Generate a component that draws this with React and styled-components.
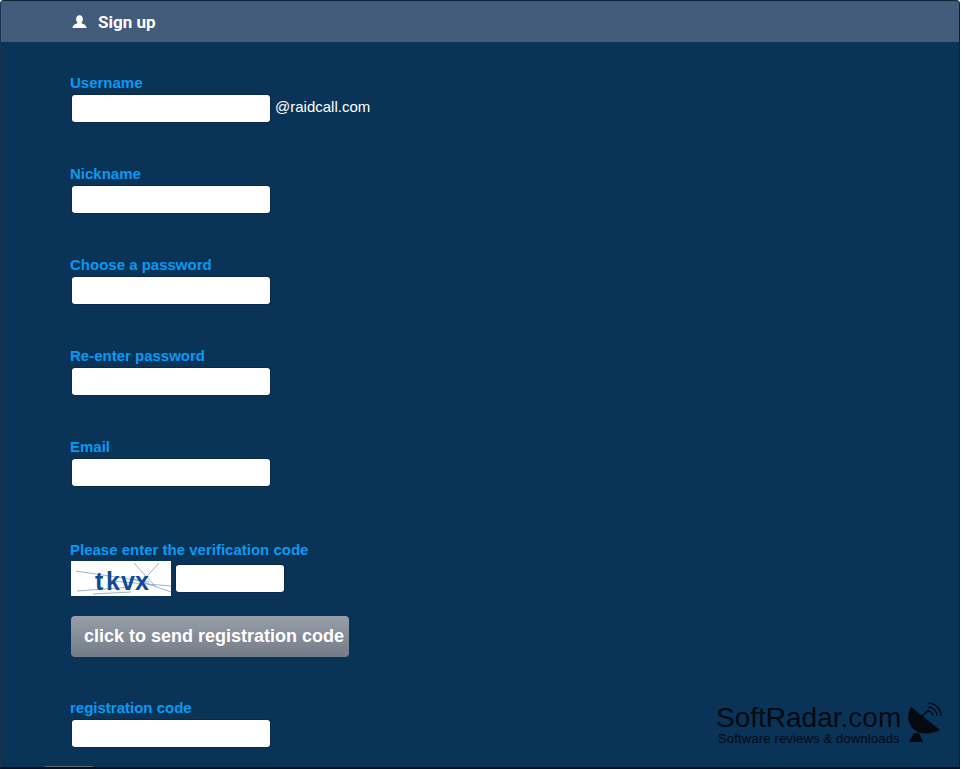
import React from 'react'
import styled, { createGlobalStyle } from 'styled-components'

const Global = createGlobalStyle`
  html, body { margin: 0; padding: 0; background: #fff; }
  body { font-family: "Liberation Sans", Arial, sans-serif; }
`
const Frame = styled.div`
  position: relative;
  width: 960px;
  height: 769px;
  box-sizing: border-box;
  background: #0a3358;
  border-top: 1px solid #0c2238;
  border-left: 1px solid #16324e;
  border-right: 1px solid #0c2238;
  border-bottom: 2px solid #05101c;
  border-radius: 4px 4px 0 0;
  overflow: hidden;
`
const Header = styled.div`
  height: 41px;
  display: flex;
  align-items: center;
  gap: 11px;
  padding: 0 0 0 71px;
  box-sizing: border-box;
  background-color: #435b7b;
  background-image:
    repeating-linear-gradient(90deg, rgba(255,255,255,.02) 0 1px, transparent 1px 4px),
    repeating-linear-gradient(0deg, rgba(0,0,0,.03) 0 1px, transparent 1px 4px);
  color: #fff;
  font: 700 17px Roboto, "Liberation Sans", sans-serif;
`
const Form = styled.div`
  padding: 33px 0 0 70px;
  display: flex;
  flex-direction: column;
`
const Field = styled.div`
  height: ${p => p.$h || 91}px;
`
const Label = styled.div`
  color: #0899f2;
  font-size: 15px;
  font-weight: 700;
  line-height: 16px;
  height: 20px;
  margin-left: -1px;
`
const Row = styled.div`
  display: flex;
  align-items: center;
  padding-left: 1px;
`
const Input = styled.input`
  box-sizing: border-box;
  display: block;
  width: ${p => p.$w || 198}px;
  height: 27px;
  border: 0;
  border-radius: 3px;
  background: #fff;
  outline: 0;
  box-shadow: 0 0 0 1px #0a2a48;
`
const Domain = styled.span`
  align-self: flex-start;
  margin-left: 5px;
  color: #fff;
  font-size: 15px;
  line-height: 24px;
`
const Captcha = styled.svg`
  display: block;
  flex: none;
  margin: -1px 5px -1px -1px;
`
const SendButton = styled.button`
  display: block;
  width: 278px;
  height: 41px;
  margin: 21px 0 0;
  padding: 0 0 0 13px;
  border: 0;
  border-radius: 4px;
  background: linear-gradient(#989ea8, #747c88);
  color: #fff;
  text-align: left;
  font: 700 18px "Liberation Sans", Arial, sans-serif;
`
const Watermark = styled.div`
  position: absolute;
  left: 715px;
  top: 700px;
  display: flex;
  color: #050a10;
`
const MarkText = styled.div`
  display: flex;
  flex-direction: column;
`
const MarkTitle = styled.span`
  font-size: 28px;
  line-height: 29px;
  margin-top: 2px;
`
const MarkSub = styled.span`
  font-size: 13px;
  line-height: 13px;
  margin-left: 2px;
  letter-spacing: 0.17px;
`
const Dish = styled.svg`
  display: block;
  flex: none;
  margin: 1px 0 0 7px;
`
const BottomTab = styled.div`
  position: absolute;
  left: 44px;
  bottom: 0;
  width: 48px;
  height: 1px;
  background: #5c6670;
`

const UserIcon = () => (
  <svg width="15" height="14" viewBox="0 0 15 14">
    <ellipse cx="7.5" cy="4.2" rx="3.3" ry="4" fill="#fff" />
    <path d="M0.5 12.5 C1 9.5 4 9 5.8 8 L9.2 8 C11 9 14 9.5 14.5 12.5 L14.5 13 L0.5 13 Z" fill="#fff" />
  </svg>
)

const CaptchaImage = () => (
  <Captcha width="100" height="35" viewBox="0 0 100 35">
    <rect width="100" height="35" fill="#fff" />
    <g stroke="#6f94b4" strokeWidth="0.7" fill="none">
      <path d="M5 10 L78 21" />
      <path d="M6 30 L60 26" />
      <path d="M63 2 L85 26" />
      <path d="M68 24 L88 2" />
      <path d="M40 20 L100 25" />
      <path d="M60 17 L100 31" />
      <path d="M22 33 L60 31" />
    </g>
    <text x="24 35 50 64" y="29" fontFamily="'Liberation Sans', sans-serif" fontWeight="700" fontSize="25" fill="#0f4c94">tkvx</text>
  </Captcha>
)

const RadarIcon = () => (
  <Dish width="36" height="42" viewBox="0 0 36 42">
    <path d="M3 5 C-2 14 0 24 8 29 C15 33 26 32 32 28 Z" fill="#050a10" />
    <path d="M6 31 L1 40 L15 40 L11 31 Z" fill="#050a10" />
    <path d="M13 15 L21 8" stroke="#050a10" strokeWidth="1.5" />
    <g stroke="#050a10" strokeWidth="1.3" fill="none">
      <path d="M20 9 A5 5 0 0 1 25 14" />
      <path d="M20 5 A9 9 0 0 1 29 14" />
      <path d="M20 1 A13 13 0 0 1 33 14" />
    </g>
  </Dish>
)

const fields = ['Username', 'Nickname', 'Choose a password', 'Re-enter password']

export default function App() {
  return (
    <>
      <Global />
      <Frame>
        <Header>
          <UserIcon />
          <span>Sign up</span>
        </Header>
        <Form>
          {fields.map((name, i) => (
            <Field key={name}>
              <Label>{name}</Label>
              <Row>
                <Input />
                {i === 0 && <Domain>@raidcall.com</Domain>}
              </Row>
            </Field>
          ))}
          <Field $h={103}>
            <Label>Email</Label>
            <Row><Input /></Row>
          </Field>
          <Field $h={158}>
            <Label>Please enter the verification code</Label>
            <Row>
              <CaptchaImage />
              <Input $w={108} />
            </Row>
            <SendButton>click to send registration code</SendButton>
          </Field>
          <Field>
            <Label>registration code</Label>
            <Row><Input /></Row>
          </Field>
        </Form>
        <Watermark>
          <MarkText>
            <MarkTitle>SoftRadar.com</MarkTitle>
            <MarkSub>Software reviews &amp; downloads</MarkSub>
          </MarkText>
          <RadarIcon />
        </Watermark>
        <BottomTab />
      </Frame>
    </>
  )
}
